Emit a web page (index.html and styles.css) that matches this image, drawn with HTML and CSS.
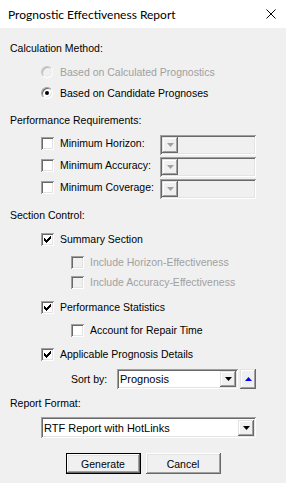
FILE: index.html
```html
<!DOCTYPE html>
<html>
<head>
<meta charset="utf-8">
<link rel="stylesheet" href="styles.css">
</head>
<body>
<div class="window">
  <div class="titlebar">
    <span class="title">Prognostic Effectiveness Report</span>
    <svg class="close" width="10" height="10" viewBox="0 0 10 10"><path d="M0.5 0.5L9.5 9.5M9.5 0.5L0.5 9.5" stroke="#000" stroke-width="1" fill="none"/></svg>
  </div>
  <div class="dialog">
    <div class="heading h-calc">Calculation Method:</div>
    <div class="opt lvl1 disabled m-r1"><span class="radio"></span><span class="txt">Based on Calculated Prognostics</span></div>
    <div class="opt lvl1 m-r2"><span class="radio on"></span><span class="txt">Based on Candidate Prognoses</span></div>

    <div class="heading h-perf">Performance Requirements:</div>
    <div class="reqs">
      <div class="req">
        <div class="opt"><span class="check"></span><span class="txt">Minimum Horizon:</span></div>
        <div class="combo off"><span class="cbtn left"><svg width="7" height="4" viewBox="0 0 7 4"><path d="M0 0h7L3.5 4z" fill="#a0a0a0"/></svg></span></div>
      </div>
      <div class="req">
        <div class="opt"><span class="check"></span><span class="txt">Minimum Accuracy:</span></div>
        <div class="combo off"><span class="cbtn left"><svg width="7" height="4" viewBox="0 0 7 4"><path d="M0 0h7L3.5 4z" fill="#a0a0a0"/></svg></span></div>
      </div>
      <div class="req">
        <div class="opt"><span class="check"></span><span class="txt">Minimum Coverage:</span></div>
        <div class="combo off"><span class="cbtn left"><svg width="7" height="4" viewBox="0 0 7 4"><path d="M0 0h7L3.5 4z" fill="#a0a0a0"/></svg></span></div>
      </div>
    </div>

    <div class="heading h-sec">Section Control:</div>
    <div class="opt lvl1 m-sum"><span class="check"><svg width="13" height="13" viewBox="0 0 13 13"><path d="M3 5h1v3H3zM4 6h1v3H4zM5 7h1v3H5zM6 6h1v3H6zM7 5h1v3H7zM8 4h1v3H8zM9 3h1v3H9z" fill="#000"/></svg></span><span class="txt">Summary Section</span></div>
    <div class="opt lvl2 disabled m-ih"><span class="check"></span><span class="txt">Include Horizon-Effectiveness</span></div>
    <div class="opt lvl2 disabled m-ia"><span class="check"></span><span class="txt">Include Accuracy-Effectiveness</span></div>
    <div class="opt lvl1 m-ps"><span class="check"><svg width="13" height="13" viewBox="0 0 13 13"><path d="M3 5h1v3H3zM4 6h1v3H4zM5 7h1v3H5zM6 6h1v3H6zM7 5h1v3H7zM8 4h1v3H8zM9 3h1v3H9z" fill="#000"/></svg></span><span class="txt">Performance Statistics</span></div>
    <div class="opt lvl2 m-ar"><span class="check"></span><span class="txt">Account for Repair Time</span></div>
    <div class="opt lvl1 m-ap"><span class="check"><svg width="13" height="13" viewBox="0 0 13 13"><path d="M3 5h1v3H3zM4 6h1v3H4zM5 7h1v3H5zM6 6h1v3H6zM7 5h1v3H7zM8 4h1v3H8zM9 3h1v3H9z" fill="#000"/></svg></span><span class="txt">Applicable Prognosis Details</span></div>
    <div class="sortrow">
      <span class="sortlabel">Sort by:</span>
      <div class="combo sortcombo"><span class="cval">Prognosis</span><span class="cbtn"><svg width="7" height="4" viewBox="0 0 7 4"><path d="M0 0h7L3.5 4z" fill="#000"/></svg></span></div>
      <span class="upbtn"><svg width="7" height="4" viewBox="0 0 7 4"><path d="M3.5 0L7 4H0z" fill="#0000ff"/></svg></span>
    </div>

    <div class="heading h-rep">Report Format:</div>
    <div class="combo rtf"><span class="cval">RTF Report with HotLinks</span><span class="cbtn"><svg width="7" height="4" viewBox="0 0 7 4"><path d="M0 0h7L3.5 4z" fill="#000"/></svg></span></div>

    <div class="buttons">
      <span class="btn default">Generate</span>
      <span class="btn">Cancel</span>
    </div>
  </div>
</div>
</body>
</html>
```

FILE: styles.css
```css
html, body {
  margin: 0;
  padding: 0;
}
body {
  width: 286px;
  height: 483px;
  overflow: hidden;
  background: #f0f0f0;
  font-family: "Liberation Sans", Arial, sans-serif;
  font-size: 10.5px;
  color: #000;
}
.window {
  width: 286px;
  height: 483px;
  display: flex;
  flex-direction: column;
}
.titlebar {
  height: 28px;
  background: #fff;
  display: flex;
  align-items: center;
  justify-content: space-between;
  padding: 0 10px 0 8px;
  flex-shrink: 0;
}
.title {
  font-family: Lato, "Open Sans", sans-serif;
  font-size: 12px;
  color: #000;
}
.close {
  display: block;
}
.dialog {
  display: flex;
  flex-direction: column;
  padding-left: 10px;
}
.heading {
  height: 14px;
  line-height: 14px;
}
.h-calc { margin-top: 13px; }
.h-perf { margin-top: 12px; }
.h-sec { margin-top: 9px; }
.h-rep { margin-top: 7px; }

.opt {
  display: flex;
  align-items: center;
  height: 16px;
}
.opt .txt {
  margin-left: 6px;
  white-space: nowrap;
}
.lvl1 { margin-left: 31px; }
.lvl2 { margin-left: 61px; }
.disabled .txt { color: #a0a0a0; }

.m-r1 { margin-top: 9px; }
.m-r2 { margin-top: 5px; }
.m-sum { margin-top: 9px; }
.m-ih { margin-top: 7px; }
.m-ia { margin-top: 4px; }
.m-ps { margin-top: 9px; }
.m-ar { margin-top: 7px; }
.m-ap { margin-top: 8px; }

.radio {
  width: 12px;
  height: 12px;
  box-sizing: border-box;
  border-radius: 50%;
  border: 1px solid;
  border-color: #a0a0a0 #fff #fff #a0a0a0;
  background: #fff;
  box-shadow: inset 1px 1px #696969, inset -1px -1px #e3e3e3;
  position: relative;
  flex-shrink: 0;
}
.disabled .radio {
  background: #f0f0f0;
  border-color: #c8c8c8 #fff #fff #c8c8c8;
  box-shadow: inset 1px 1px #b8b8b8, inset -1px -1px #e8e8e8;
}
.radio.on::after {
  content: "";
  position: absolute;
  left: 3px;
  top: 3px;
  width: 4px;
  height: 4px;
  border-radius: 50%;
  background: #000;
}
.opt .radio + .txt { margin-left: 7px; }

.check {
  width: 13px;
  height: 13px;
  box-sizing: border-box;
  background: #fff;
  box-shadow: inset 1px 1px #a0a0a0, inset -1px -1px #fff, inset 2px 2px #696969, inset -2px -2px #e3e3e3;
  flex-shrink: 0;
  display: block;
}
.check svg { display: block; }
.disabled .check { background: #f0f0f0; }

.reqs {
  margin-top: 6px;
  margin-left: 31px;
  display: flex;
  flex-direction: column;
}
.req {
  height: 22px;
  display: flex;
  align-items: flex-start;
}
.req .opt {
  width: 119px;
  height: 20px;
}

.combo {
  box-sizing: border-box;
  display: flex;
  align-items: center;
  background: #fff;
  box-shadow: inset 1px 1px #a0a0a0, inset -1px -1px #fff, inset 2px 2px #696969, inset -2px -2px #e3e3e3;
  padding: 2px;
}
.combo.off {
  width: 96px;
  height: 20px;
  margin-top: 2px;
  background: #f0f0f0;
}
.cbtn {
  width: 16px;
  height: 16px;
  box-sizing: border-box;
  background: #f0f0f0;
  box-shadow: inset -1px -1px #696969, inset 1px 1px #e3e3e3, inset -2px -2px #a0a0a0, inset 2px 2px #fff;
  display: flex;
  align-items: center;
  justify-content: center;
  flex-shrink: 0;
}
.cbtn svg { display: block; }
.cval {
  flex: 1;
  padding-left: 1px;
  white-space: nowrap;
  line-height: 16px;
  font-size: 11px;
}

.sortrow {
  margin-top: 7px;
  margin-left: 61px;
  height: 20px;
  display: flex;
  align-items: center;
}
.sortlabel {
  width: 46px;
}
.sortcombo {
  width: 121px;
  height: 20px;
}
.upbtn {
  margin-left: 2px;
  width: 16px;
  height: 20px;
  box-sizing: border-box;
  background: #f0f0f0;
  box-shadow: inset -1px -1px #696969, inset 1px 1px #e3e3e3, inset -2px -2px #a0a0a0, inset 2px 2px #fff;
  display: flex;
  align-items: center;
  justify-content: center;
}
.upbtn svg { display: block; }

.rtf {
  margin-top: 7px;
  margin-left: 31px;
  width: 215px;
  height: 21px;
}

.buttons {
  margin-top: 15px;
  margin-left: -10px;
  display: flex;
  justify-content: center;
  gap: 5px;
}
.btn {
  width: 75px;
  height: 21px;
  box-sizing: border-box;
  display: flex;
  align-items: center;
  justify-content: center;
  background: #f0f0f0;
  box-shadow: inset -1px -1px #696969, inset 1px 1px #fff, inset -2px -2px #a0a0a0, inset 2px 2px #e3e3e3;
}
.btn.default {
  border: 1px solid #000;
}
```
